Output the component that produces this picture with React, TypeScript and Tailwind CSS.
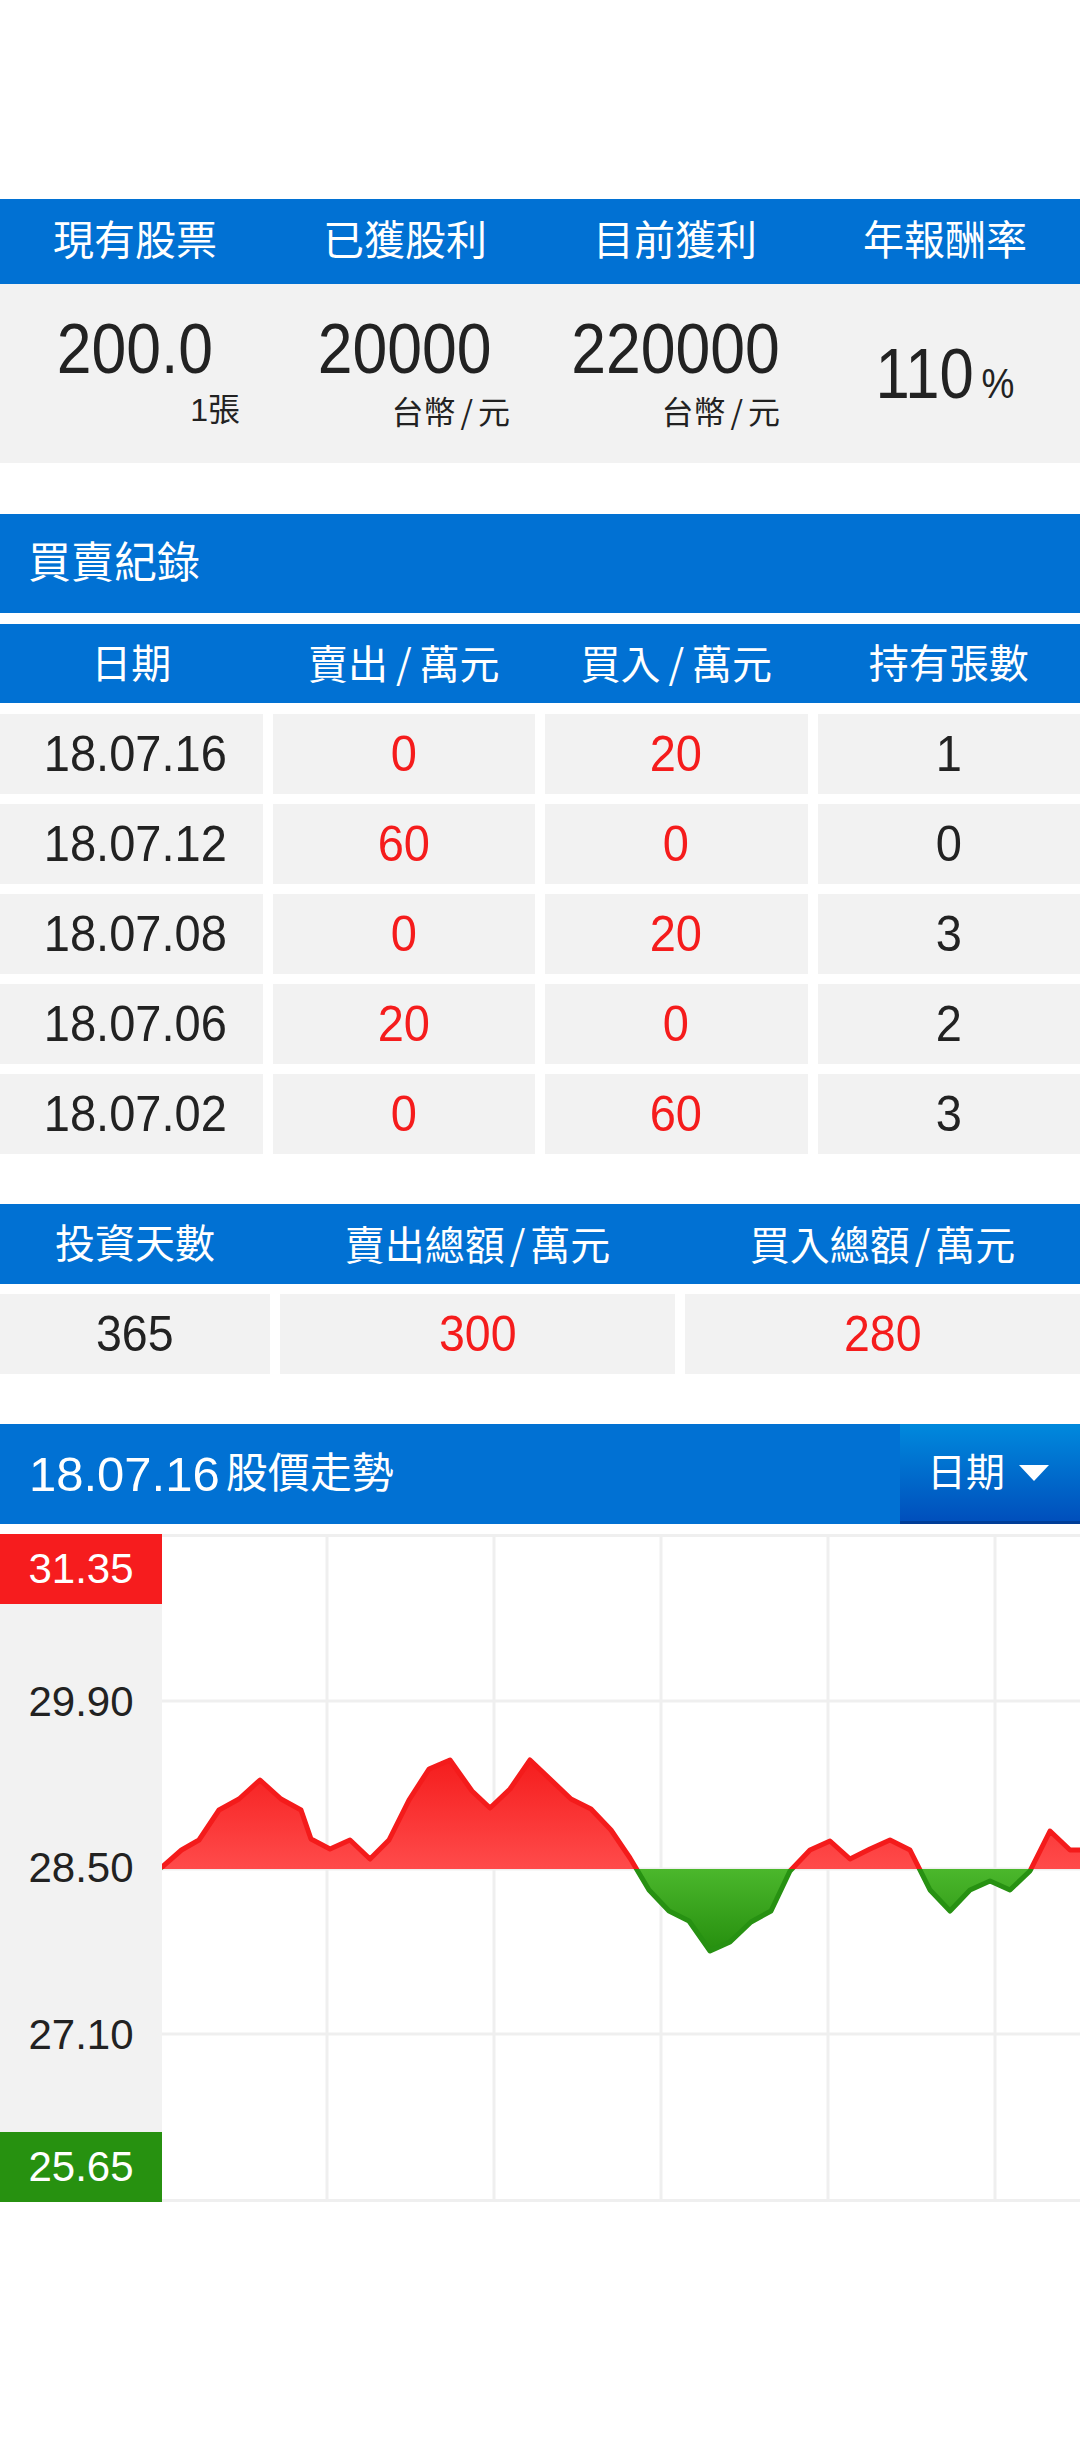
import React from "react";

const BLUE = "bg-[#0171d3]";

const rows: [string, string, string, string][] = [
  ["18.07.16", "0", "20", "1"],
  ["18.07.12", "60", "0", "0"],
  ["18.07.08", "0", "20", "3"],
  ["18.07.06", "20", "0", "2"],
  ["18.07.02", "0", "60", "3"],
];

const pts: [number, number][] = [
  [0, 333], [19.5, 316], [37, 306], [57, 276], [77, 265], [98, 246], [119, 265], [139, 276],
  [149, 305], [168, 315], [188, 306], [208, 325], [227, 306], [247, 266], [267, 235], [288, 226],
  [310, 257], [328, 274], [348, 255], [368, 226], [409, 265], [429, 275], [449, 296], [468, 324],
  [487, 356], [507, 377], [527, 387], [548, 417], [568, 408], [589, 388], [609, 377], [628, 337],
  [648, 316], [668, 307], [688, 325], [708, 315], [728, 306], [748, 316], [768, 356], [788, 377],
  [808, 356], [828, 347], [848, 356], [868, 337], [888, 297], [908, 316], [918, 316],
];

function Slash({ cls }: { cls: string }) {
  return <span className={`font-['Noto_Sans_CJK_TC',sans-serif] ${cls}`}>/</span>;
}

function Chart() {
  const W = 918;
  const H = 668;
  const base = 335;
  const line = pts.map((p) => `${p[0]},${p[1]}`).join(" ");
  const area = `0,${base} ${line} ${W},${base}`;
  const vx = [165, 332, 499, 666, 833];
  const hy = [167, 335, 500];
  return (
    <svg width={W} height={H} viewBox={`0 0 ${W} ${H}`} className="block">
      <defs>
        <clipPath id="above">
          <rect x="0" y="0" width={W} height={base} />
        </clipPath>
        <clipPath id="below">
          <rect x="0" y={base} width={W} height={H - base} />
        </clipPath>
        <linearGradient id="redg" gradientUnits="userSpaceOnUse" x1="0" y1="226" x2="0" y2={base}>
          <stop offset="0" stopColor="#f51d1d" />
          <stop offset="1" stopColor="#ff4b4b" />
        </linearGradient>
        <linearGradient id="greeng" gradientUnits="userSpaceOnUse" x1="0" y1={base} x2="0" y2="417">
          <stop offset="0" stopColor="#4bb72c" />
          <stop offset="1" stopColor="#268f0e" />
        </linearGradient>
      </defs>
      <rect x="0" y="0" width={W} height={H} fill="#ffffff" />
      {vx.map((x) => (
        <rect key={x} x={x - 1.5} y="0" width="3" height={H} fill="#efefef" />
      ))}
      {hy.map((y) => (
        <rect key={y} x="0" y={y - 1.5} width={W} height="3" fill="#efefef" />
      ))}
      <rect x="0" y="0" width={W} height="3" fill="#efefef" />
      <rect x="0" y={H - 3} width={W} height="3" fill="#efefef" />
      <polygon points={area} fill="url(#redg)" clipPath="url(#above)" />
      <polygon points={area} fill="url(#greeng)" clipPath="url(#below)" />
      <polyline points={line} fill="none" stroke="#f41b1b" strokeWidth="5" strokeLinejoin="round" strokeLinecap="round" clipPath="url(#above)" />
      <polyline points={line} fill="none" stroke="#279112" strokeWidth="5" strokeLinejoin="round" strokeLinecap="round" clipPath="url(#below)" />
    </svg>
  );
}

export default function App() {
  return (
    <div className="w-[1080px] min-h-[2442px] bg-white text-[#222222] font-['Liberation_Sans','Noto_Sans_CJK_TC',sans-serif]">
      <div className="h-[199px]" />

      {/* Summary stats */}
      <div className={`grid grid-cols-4 h-[85px] ${BLUE} text-white text-[41px] leading-none items-center text-center`}>
        <div>現有股票</div>
        <div>已獲股利</div>
        <div>目前獲利</div>
        <div>年報酬率</div>
      </div>
      <div className="grid grid-cols-4 h-[179px] bg-[#f2f2f2]">
        {[
          ["200.0", false, "1張"],
          ["20000", true, ""],
          ["220000", true, ""],
        ].map(([n, money, s]) => (
          <div key={String(n)} className="flex flex-col pt-[29px]">
            <div className="text-center text-[71px] leading-[71px]">
              <span className="inline-block scale-x-[0.88]">{n}</span>
            </div>
            <div className="mt-[10px] text-right pr-[30px] text-[32px] leading-[32px] whitespace-nowrap">
              {money ? (
                <>
                  台幣<Slash cls="mx-[5px]" />元
                </>
              ) : (
                s
              )}
            </div>
          </div>
        ))}
        <div className="flex justify-center pt-[55px]">
          <div className="inline-block scale-x-[0.88] whitespace-nowrap">
            <span className="text-[70px] leading-[70px]">110</span>
            <span className="ml-[9px] text-[42px] leading-[42px]">%</span>
          </div>
        </div>
      </div>

      {/* Trade records */}
      <div className={`mt-[51px] h-[99px] ${BLUE} flex items-center pl-[28px] text-white text-[43px] leading-none`}>
        買賣紀錄
      </div>
      <div className={`mt-[11px] h-[79px] ${BLUE} grid grid-cols-4 gap-x-[10px] items-center text-center text-white text-[40px] leading-none`}>
        <div>日期</div>
        <div>
          賣出<Slash cls="mx-[8px]" />萬元
        </div>
        <div>
          買入<Slash cls="mx-[8px]" />萬元
        </div>
        <div>持有張數</div>
      </div>
      <div className="mt-[11px] grid grid-cols-4 gap-[10px]">
        {rows.map((r) =>
          r.map((v, i) => (
            <div
              key={r[0] + i}
              className={`h-[80px] bg-[#f2f2f2] flex items-center justify-center text-[50px] leading-none ${
                i === 1 || i === 2 ? "text-[#f51c1c]" : "text-[#222222]"
              }`}
            >
              <span className={`inline-block scale-x-[0.94] ${i === 0 ? "translate-x-[4px]" : ""}`}>{v}</span>
            </div>
          ))
        )}
      </div>

      {/* Totals */}
      <div className={`mt-[50px] h-[80px] ${BLUE} grid grid-cols-[270px_1fr_1fr] gap-x-[10px] items-center text-center text-white text-[40px] leading-none`}>
        <div>投資天數</div>
        <div>
          賣出總額<Slash cls="mx-[5px]" />萬元
        </div>
        <div>
          買入總額<Slash cls="mx-[5px]" />萬元
        </div>
      </div>
      <div className="mt-[10px] grid grid-cols-[270px_1fr_1fr] gap-x-[10px]">
        {[
          ["365", "text-[#222222]"],
          ["300", "text-[#f51c1c]"],
          ["280", "text-[#f51c1c]"],
        ].map(([v, c]) => (
          <div key={v} className={`h-[80px] bg-[#f2f2f2] flex items-center justify-center text-[50px] leading-none ${c}`}>
            <span className="inline-block scale-x-[0.93]">{v}</span>
          </div>
        ))}
      </div>

      {/* Chart header */}
      <div className={`mt-[50px] h-[100px] ${BLUE} flex`}>
        <div className="flex-1 flex items-center pl-[29px] text-white">
          <span className="text-[49px] leading-none">18.07.16</span>
          <span className="ml-[6px] text-[42px] leading-none">股價走勢</span>
        </div>
        <div className="w-[180px] h-[100px] bg-linear-to-b from-[#0089dd] to-[#004fbc] border-b-[3px] border-[#003e98] flex items-center pl-[27px] text-white">
          <span className="text-[39px] leading-none">日期</span>
          <svg width="30" height="16" viewBox="0 0 30 16" className="ml-[14px]">
            <polygon points="0,0 30,0 15,16" fill="#ffffff" />
          </svg>
        </div>
      </div>

      {/* Chart */}
      <div className="mt-[10px] flex h-[668px]">
        <div className="w-[162px] flex flex-col bg-[#f2f2f2] font-['Liberation_Sans',sans-serif] text-[42px] leading-[42px]">
          <div className="h-[70px] bg-[#f61c1e] text-white flex items-center justify-center">31.35</div>
          <div className="h-[528px] flex flex-col items-center">
            <div className="mt-[77px] h-[42px]">29.90</div>
            <div className="mt-[124px] h-[42px]">28.50</div>
            <div className="mt-[125px] h-[42px]">27.10</div>
          </div>
          <div className="h-[70px] bg-[#279110] text-white flex items-center justify-center">25.65</div>
        </div>
        <Chart />
      </div>
    </div>
  );
}
